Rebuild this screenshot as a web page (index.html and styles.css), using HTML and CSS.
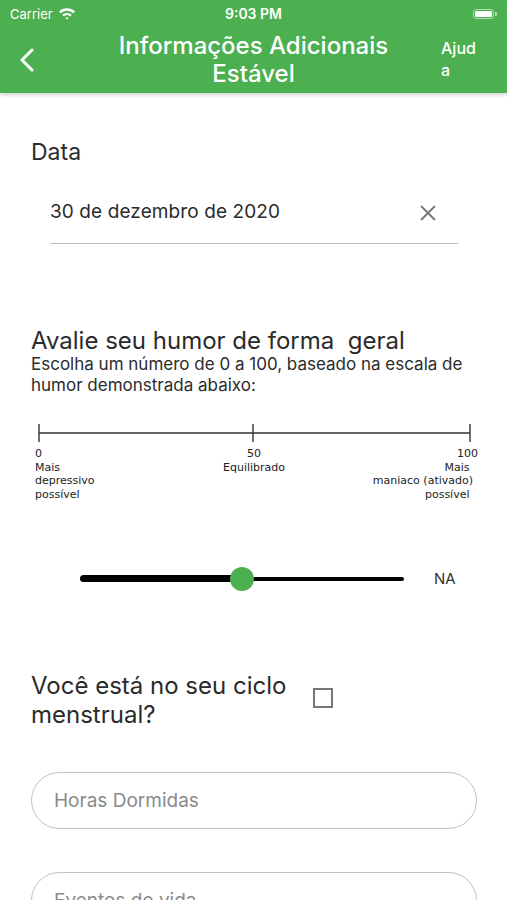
FILE: index.html
```html
<!DOCTYPE html>
<html>
<head>
  <title>Informações Adicionais</title>
  <link rel="stylesheet" href="styles.css">
</head>
<body>
  <div class="app-header">
    <div class="status-bar">
      <div class="status-left">
        <span>Carrier</span>
        <svg class="wifi" width="18" height="13" viewBox="0 0 18 13">
          <path d="M1 4.6 A11.5 11.5 0 0 1 17 4.6 L15.3 6.3 A9 9 0 0 0 2.7 6.3 Z" fill="#fff"/>
          <path d="M4.2 7.8 A7 7 0 0 1 13.8 7.8 L12.1 9.5 A4.6 4.6 0 0 0 5.9 9.5 Z" fill="#fff"/>
          <path d="M7.4 11 A2.4 2.4 0 0 1 10.6 11 L9 12.6 Z" fill="#fff"/>
        </svg>
      </div>
      <div class="status-time">9:03 PM</div>
      <div class="status-right">
        <div class="battery"><div class="battery-fill"></div></div>
        <div class="battery-nub"></div>
      </div>
    </div>
    <div class="nav-bar">
      <div class="nav-back">
        <svg width="16" height="24" viewBox="0 0 16 24">
          <path d="M13 2 L3 12 L13 22" fill="none" stroke="#fff" stroke-width="3" stroke-linecap="round" stroke-linejoin="round"/>
        </svg>
      </div>
      <div class="nav-title">Informações Adicionais<br>Estável</div>
      <div class="nav-help">Ajuda</div>
    </div>
  </div>

  <div class="content">
    <div class="section-title">Data</div>
    <div class="date-field">
      <span class="date-value">30 de dezembro de 2020</span>
      <svg class="clear-icon" width="16" height="16" viewBox="0 0 16 16">
        <path d="M1 1 L15 15 M15 1 L1 15" stroke="#777" stroke-width="1.8"/>
      </svg>
    </div>

    <div class="mood">
      <div class="mood-title">Avalie seu humor de forma&nbsp; geral</div>
      <div class="mood-help">Escolha um número de 0 a 100, baseado na escala de humor demonstrada abaixo:</div>

      <div class="scale">
        <svg class="scale-line" width="442" height="20" viewBox="0 0 442 20">
          <path d="M4 1 V19 M4 10 H435 M218 1 V19 M435 1 V19" stroke="#333" stroke-width="1.4" fill="none"/>
        </svg>
        <div class="scale-labels">
          <div class="scale-left">0<br>Mais<br>depressivo<br>possível</div>
          <div class="scale-mid">50<br>Equilibrado</div>
          <div class="scale-right"><span class="scale-num">100</span><br>Mais&nbsp;<br>maniaco (ativado)<br>possível&nbsp;</div>
        </div>
      </div>
    </div>

    <div class="slider-row">
      <div class="slider">
        <div class="slider-active" style="width: 50%"></div>
        <div class="slider-rest"></div>
        <div class="slider-thumb" style="left: 50%"></div>
      </div>
      <div class="slider-value">NA</div>
    </div>

    <div class="cycle-row">
      <div class="cycle-text">Você está no seu ciclo menstrual?</div>
      <div class="checkbox"></div>
    </div>

    <div class="pill-input">Horas Dormidas</div>
    <div class="pill-input">Eventos de vida</div>
  </div>
</body>
</html>
```

FILE: styles.css
```css
body {
  margin: 0;
  font-family: Inter, "Liberation Sans", sans-serif;
  background-color: #fff;
  color: #2b2b2b;
  width: 507px;
  height: 900px;
  overflow: hidden;
}

.app-header {
  background-color: #4caf50;
  color: #fff;
  box-shadow: 0 2px 4px rgba(0, 0, 0, 0.18);
  position: relative;
}

.status-bar {
  height: 27px;
  display: flex;
  align-items: center;
  justify-content: space-between;
  padding: 0 10px 0 10px;
  font-size: 13px;
}

.status-left {
  display: flex;
  align-items: center;
  gap: 5px;
  width: 100px;
}

.status-time {
  font-weight: 600;
  font-size: 14px;
}

.status-right {
  display: flex;
  align-items: center;
  justify-content: flex-end;
  width: 100px;
}

.battery {
  width: 21px;
  height: 10px;
  border: 1px solid rgba(255, 255, 255, 0.55);
  border-radius: 3px;
  padding: 1px;
  box-sizing: border-box;
}

.battery-fill {
  background-color: #fff;
  height: 100%;
  border-radius: 1.5px;
}

.battery-nub {
  width: 2px;
  height: 4px;
  background-color: rgba(255, 255, 255, 0.55);
  border-radius: 0 1px 1px 0;
  margin-left: 1px;
}

.nav-bar {
  height: 66px;
  display: flex;
  align-items: center;
}

.nav-back {
  width: 86px;
  padding-left: 19px;
  display: flex;
  align-items: center;
  box-sizing: border-box;
}

.nav-title {
  flex: 1;
  text-align: center;
  font-size: 24px;
  font-weight: 500;
  line-height: 28px;
}

.nav-help {
  width: 40px;
  margin-left: 20px;
  margin-right: 26px;
  font-size: 16px;
  font-weight: 500;
  line-height: 22px;
  word-break: break-all;
  padding-bottom: 2px;
}

.content {
  padding: 0 30px 0 31px;
}

.section-title {
  font-size: 23px;
  line-height: 26px;
  margin-top: 46px;
}

.date-field {
  margin: 36px 19px 0 19px;
  padding-bottom: 20px;
  border-bottom: 1.5px solid #bdbdbd;
  display: flex;
  align-items: center;
  justify-content: space-between;
}

.date-value {
  font-size: 19px;
  line-height: 22px;
  letter-spacing: 0.1px;
}

.clear-icon {
  margin-right: 22px;
  margin-top: 2px;
}

.mood {
  margin-top: 84px;
}

.mood-title {
  font-size: 24px;
  line-height: 26px;
}

.mood-help {
  font-size: 17px;
  line-height: 21px;
  margin-top: 0;
}

.scale {
  margin: 27px 0 0 4px;
  width: 442px;
  font-family: "DejaVu Sans", sans-serif;
  font-size: 11px;
  line-height: 13.7px;
  color: #222;
}

.scale-line {
  display: block;
}

.scale-labels {
  display: grid;
  grid-template-columns: 1fr auto 1fr;
  margin-top: 4px;
}

.scale-mid {
  text-align: center;
  margin-right: 4px;
}

.scale-right {
  text-align: right;
  padding-right: 4px;
}

.scale-num {
  margin-right: -5px;
}

.slider-row {
  display: flex;
  align-items: center;
  margin-top: 65px;
  height: 24px;
}

.slider {
  position: relative;
  display: flex;
  align-items: center;
  width: 324px;
  height: 24px;
  margin-left: 49px;
}

.slider-active {
  height: 7px;
  background-color: #000;
  border-radius: 4px 0 0 4px;
}

.slider-rest {
  flex: 1;
  height: 4px;
  background-color: #000;
  border-radius: 0 2px 2px 0;
}

.slider-thumb {
  position: absolute;
  top: 0;
  width: 24px;
  height: 24px;
  margin-left: -12px;
  border-radius: 50%;
  background-color: #4caf50;
}

.slider-value {
  margin-left: 30px;
  font-size: 15px;
  color: #333;
}

.cycle-row {
  display: flex;
  align-items: flex-start;
  margin-top: 80px;
}

.cycle-text {
  width: 270px;
  font-size: 24px;
  line-height: 29px;
}

.checkbox {
  width: 16px;
  height: 16px;
  border: 2px solid #777;
  margin-left: 12px;
  margin-top: 17px;
}

.pill-input {
  height: 55px;
  border: 1.5px solid #c2c2c2;
  border-radius: 30px;
  display: flex;
  align-items: center;
  padding-left: 22px;
  font-size: 19px;
  color: #8a8a8a;
  margin-top: 43px;
}

.pill-input + .pill-input {
  margin-top: 43px;
}
```
